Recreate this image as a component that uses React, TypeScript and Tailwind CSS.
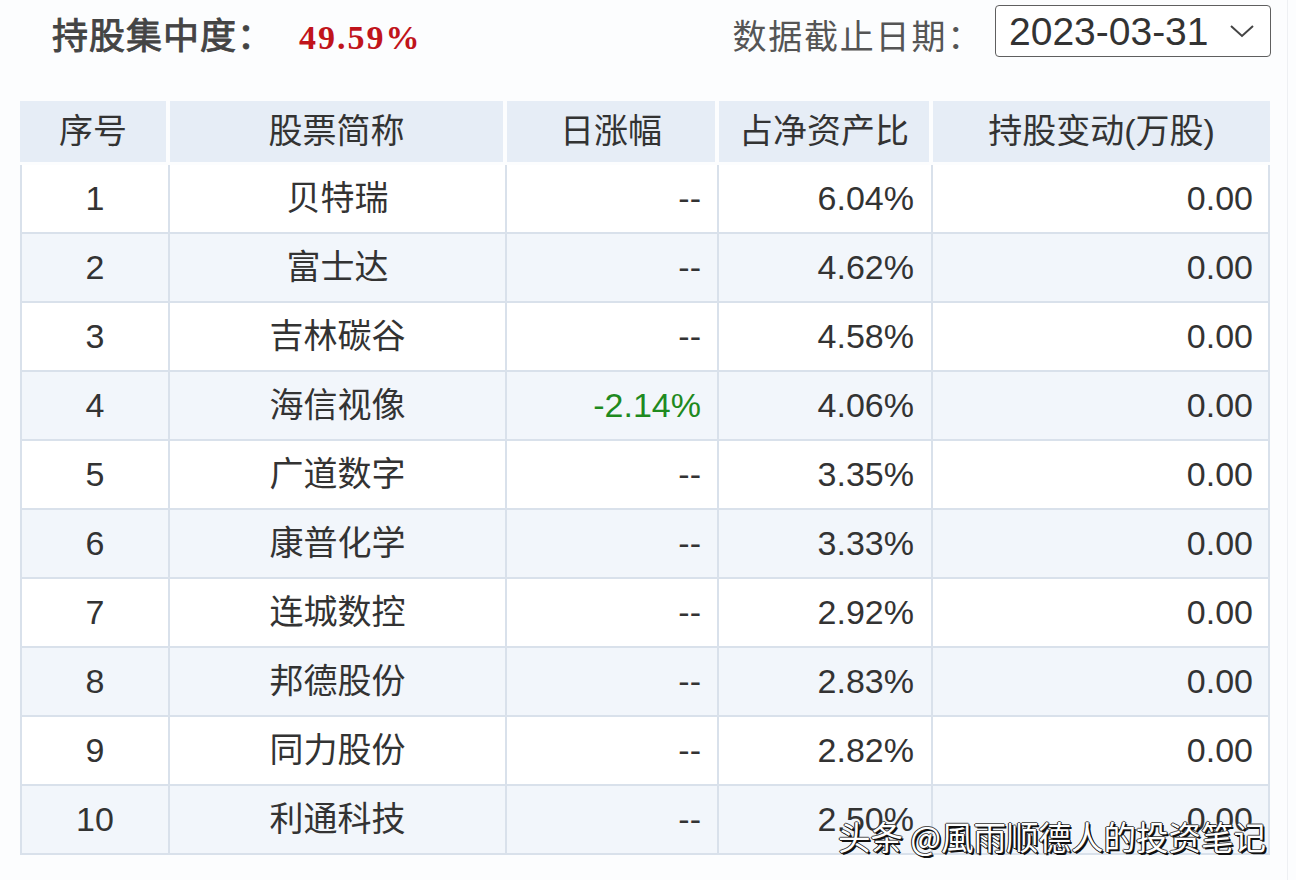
import React from "react";

const rows = [
  { n: "1", name: "贝特瑞", chg: "--", pct: "6.04%", hold: "0.00" },
  { n: "2", name: "富士达", chg: "--", pct: "4.62%", hold: "0.00" },
  { n: "3", name: "吉林碳谷", chg: "--", pct: "4.58%", hold: "0.00" },
  { n: "4", name: "海信视像", chg: "-2.14%", pct: "4.06%", hold: "0.00" },
  { n: "5", name: "广道数字", chg: "--", pct: "3.35%", hold: "0.00" },
  { n: "6", name: "康普化学", chg: "--", pct: "3.33%", hold: "0.00" },
  { n: "7", name: "连城数控", chg: "--", pct: "2.92%", hold: "0.00" },
  { n: "8", name: "邦德股份", chg: "--", pct: "2.83%", hold: "0.00" },
  { n: "9", name: "同力股份", chg: "--", pct: "2.82%", hold: "0.00" },
  { n: "10", name: "利通科技", chg: "--", pct: "2.50%", hold: "0.00" },
];

const cols = "grid grid-cols-[150px_337px_212px_214px_337px]";
const font = { fontFamily: '"Liberation Sans", "Noto Sans CJK SC", sans-serif' };

export default function App() {
  return (
    <div
      className="relative w-[1296px] h-[880px] bg-[#fcfdfe] overflow-hidden text-[#333]"
      style={font}
    >
      {/* top bar */}
      <div className="flex items-start justify-between pl-[52px] pr-[25px] h-[101px]">
        <div className="flex items-center mt-[14px] h-[46px]">
          <span className="text-[36px] text-[#444] tracking-[1px] [-webkit-text-stroke:0.9px_#444]">持股集中度：</span>
          <span
            className="ml-[25px] text-[34px] font-bold text-[#c0141b] tracking-[2px]"
            style={{ fontFamily: '"Liberation Serif", serif' }}
          >
            49.59%
          </span>
        </div>
        <div className="flex items-start">
          <span className="mt-[14px] h-[46px] flex items-center text-[34px] text-[#555] tracking-[1.8px]">数据截止日期：</span>
          <div className="ml-[12px] mt-[5px] h-[52px] w-[276px] border-[1.5px] border-[#5f5f5f] rounded-[4px] bg-white flex items-center pl-[13px] pr-[12px] justify-between">
            <span className="text-[39px] text-[#333] leading-none">2023-03-31</span>
            <svg width="28" height="16" viewBox="0 0 28 16" className="mr-[2px]">
              <path d="M3 3 L14 13 L25 3" fill="none" stroke="#444" strokeWidth="2" />
            </svg>
          </div>
        </div>
      </div>

      {/* table */}
      <div className="ml-[20px] w-[1250px]">
        <div className={`${cols} h-[61px]`}>
          {["序号", "股票简称", "日涨幅", "占净资产比", "持股变动(万股)"].map((h, i) => (
            <div
              key={h}
              className={`bg-[#e6edf6] flex items-center justify-center text-[34px] text-[#333] ${i < 4 ? "mr-[4px]" : ""}`}
            >
              {h}
            </div>
          ))}
        </div>
        <div className="mt-[3px] border-l-2 border-r-2 border-[#d9e1eb]">
          {rows.map((r, i) => (
            <div
              key={r.n}
              className={`grid grid-cols-[148px_337px_212px_214px_335px] h-[69px] border-b-2 border-[#d9e1eb] text-[34px] ${
                i % 2 === 1 ? "bg-[#f2f6fb]" : "bg-white"
              }`}
            >
              <div className="flex items-center justify-center border-r-2 border-[#d9e1eb]">{r.n}</div>
              <div className="flex items-center justify-center border-r-2 border-[#d9e1eb]">{r.name}</div>
              <div
                className={`flex items-center justify-end pr-[16px] border-r-2 border-[#d9e1eb] ${
                  r.chg === "--" ? "text-[#333]" : "text-[#1f8a1f]"
                }`}
              >
                {r.chg}
              </div>
              <div className="flex items-center justify-end pr-[17px] border-r-2 border-[#d9e1eb]">{r.pct}</div>
              <div className="flex items-center justify-end pr-[15px]">{r.hold}</div>
            </div>
          ))}
        </div>
      </div>

      {/* watermark */}
      <div
        className="absolute left-[838px] top-[812px] text-[32.5px] text-white whitespace-nowrap"
        style={{
          fontFamily: '"Noto Sans CJK SC", sans-serif',
          textShadow:
            "2px 2px 0 #111, -1px 0 0 #222, 1px 0 0 #222, 0 1px 0 #222, 0 -1px 0 #555",
        }}
      >
        头条 @風雨顺德人的投资笔记
      </div>

      <div className="absolute right-[8px] top-0 h-full w-px bg-[#eef0f3]" />
    </div>
  );
}
